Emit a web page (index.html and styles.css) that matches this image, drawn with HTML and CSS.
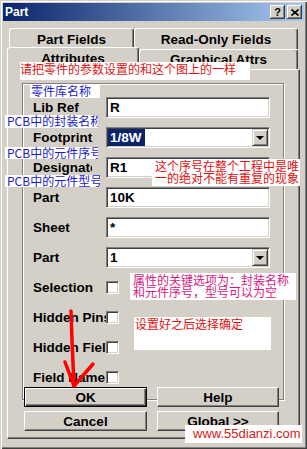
FILE: index.html
```html
<!DOCTYPE html>
<html lang="zh">
<head>
    <meta charset="UTF-8">
    <title>Part</title>
    <link rel="stylesheet" href="styles.css">
</head>
<body>
<div class="window">
    <div class="titlebar">
        <span class="title">Part</span>
        <div class="caption-btns">
            <span class="cbtn">?</span>
            <span class="cbtn">
                <svg width="8" height="7" viewBox="0 0 8 7"><path d="M0.5 0.5 L7.5 6.5 M7.5 0.5 L0.5 6.5" stroke="#000" stroke-width="1.6"/></svg>
            </span>
        </div>
    </div>

    <div class="client">
        <div class="tabrow row1">
            <div class="tab t1">Part Fields</div>
            <div class="tab t2">Read-Only Fields</div>
        </div>
        <div class="tabrow row2">
            <div class="tab t3 active">Attributes</div>
            <div class="tab t4">Graphical Attrs</div>
        </div>

        <div class="panel">
            <div class="group">
                <div class="row"><span class="label">Lib Ref</span><div class="field">R</div></div>
                <div class="row"><span class="label">Footprint</span>
                    <div class="field select"><span class="sel">1/8W</span><span class="drop"></span></div>
                </div>
                <div class="row"><span class="label short">Designator</span><div class="field">R1</div></div>
                <div class="row"><span class="label">Part</span><div class="field">10K</div></div>
                <div class="row"><span class="label">Sheet</span><div class="field">*</div></div>
                <div class="row"><span class="label">Part</span>
                    <div class="field select"><span>1</span><span class="drop"></span></div>
                </div>
                <div class="row"><span class="label">Selection</span><span class="check"></span></div>
                <div class="row"><span class="label">Hidden Pins</span><span class="check"></span></div>
                <div class="row"><span class="label">Hidden Fields</span><span class="check"></span></div>
                <div class="row"><span class="label">Field Name</span><span class="check"></span></div>
            </div>
            <div class="buttons">
                <div class="btn default">OK</div>
                <div class="btn">Help</div>
                <div class="btn">Cancel</div>
                <div class="btn">Global &gt;&gt;</div>
            </div>
        </div>
    </div>

    <!-- annotations pasted over the dialog -->
    <div class="note red n-top">请把零件的参数设置的和这个图上的一样</div>
    <div class="note blue n-lib">零件库名称</div>
    <div class="note blue n-fp">PCB中的封装名称</div>
    <div class="note blue n-des">PCB中的元件序号</div>
    <div class="note blue n-part">PCB中的元件型号</div>
    <div class="note red n-uniq">这个序号在整个工程中是唯<br>一的绝对不能有重复的现象</div>
    <div class="note pink n-key">属性的关键选项为：封装名称<br>和元件序号，型号可以为空</div>
    <div class="note red n-ok">设置好之后选择确定</div>
    <div class="watermark">www.55dianzi.com</div>

    <svg class="arrow" width="307" height="449" viewBox="0 0 307 449">
        <path d="M71 311 L72 340 L74 386" stroke="#f00" stroke-width="3.5" fill="none" stroke-linecap="round"/>
        <path d="M65 362 L74 386 L93 364" stroke="#f00" stroke-width="3.5" fill="none" stroke-linecap="round" stroke-linejoin="round"/>
    </svg>
</div>
</body>
</html>
```

FILE: styles.css
```css
body {
    margin: 0;
    font-family: "Liberation Sans", Arial, sans-serif;
    background: #d4d0c8;
}
.window {
    position: relative;
    width: 307px;
    height: 449px;
    box-sizing: border-box;
    padding: 3px;
    background: #d4d0c8;
    box-shadow: inset 1px 1px #d4d0c8, inset 2px 2px #fff, inset -1px -1px #404040, inset -2px -2px #808080;
    overflow: hidden;
}
.titlebar {
    height: 18px;
    display: flex;
    align-items: center;
    justify-content: space-between;
    padding: 0 2px 0 2px;
    background: linear-gradient(to right, #0a246a, #a6caf0);
}
.title {
    color: #fff;
    font-weight: bold;
    font-size: 12px;
}
.caption-btns {
    display: flex;
    gap: 2px;
}
.cbtn {
    width: 15px;
    height: 14px;
    box-sizing: border-box;
    background: #d4d0c8;
    box-shadow: inset -1px -1px #404040, inset 1px 1px #fff, inset -2px -2px #808080;
    display: flex;
    align-items: center;
    justify-content: center;
    font-weight: bold;
    font-size: 11px;
}
.client {
    padding: 7px 4px 0 4px;
}
.tabrow {
    display: flex;
}
.row1 {
    margin-left: 2px;
    height: 21px;
}
.row2 {
    height: 20px;
}
.tab {
    box-sizing: border-box;
    height: 100%;
    background: #d4d0c8;
    border-top: 1px solid #fff;
    border-left: 1px solid #fff;
    border-right: 1px solid #404040;
    box-shadow: inset -1px 0 #808080;
    border-radius: 3px 3px 0 0;
    display: flex;
    align-items: center;
    justify-content: center;
    font-weight: bold;
    font-size: 13.5px;
}
.t1 { width: 125px; }
.t2 { width: 164px; }
.t3 { width: 132px; }
.t4 { width: 159px; }
.tab.active {
    position: relative;
    z-index: 2;
    height: 23px;
    margin-top: -2px;
    padding-bottom: 2px;
}
.panel {
    width: 293px;
    height: 370px;
    box-sizing: border-box;
    border-top: 1px solid #fff;
    border-left: 1px solid #fff;
    border-right: 1px solid #404040;
    border-bottom: 1px solid #404040;
    box-shadow: inset -1px -1px #808080;
    padding: 13px 0 0 14px;
}
.group {
    width: 262px;
    height: 317px;
    box-sizing: border-box;
    border: 1px solid #808080;
    box-shadow: inset 1px 1px #fff, 1px 1px #fff;
    padding: 13px 0 0 10px;
    display: flex;
    flex-direction: column;
    gap: 9px;
}
.row {
    display: flex;
    align-items: center;
    height: 21px;
}
.label {
    width: 73px;
    flex-shrink: 0;
    overflow: hidden;
    white-space: nowrap;
    font-weight: bold;
    font-size: 13.5px;
}
.label.short {
    width: 59px;
    margin-right: 14px;
}
.field {
    width: 164px;
    height: 21px;
    box-sizing: border-box;
    background: #fff;
    border: 1px solid;
    border-color: #808080 #fff #fff #808080;
    box-shadow: inset 1px 1px #404040, inset -1px -1px #d4d0c8;
    padding-left: 3px;
    display: flex;
    align-items: center;
    font-weight: bold;
    font-size: 13.5px;
}
.select {
    padding-left: 1px;
}
.select span:first-child {
    padding-left: 2px;
}
.sel {
    background: #0a246a;
    color: #fff;
    height: 17px;
    line-height: 17px;
    padding-right: 3px;
}
.drop {
    margin-left: auto;
    margin-right: 1px;
    width: 16px;
    height: 17px;
    box-sizing: border-box;
    background: #d4d0c8;
    border: 1px solid;
    border-color: #d4d0c8 #404040 #404040 #d4d0c8;
    box-shadow: inset 1px 1px #fff, inset -1px -1px #808080;
    position: relative;
}
.drop::after {
    content: "";
    position: absolute;
    left: 3px;
    top: 6px;
    border-left: 4px solid transparent;
    border-right: 4px solid transparent;
    border-top: 4px solid #000;
}
.check {
    width: 13px;
    height: 13px;
    box-sizing: border-box;
    background: #fff;
    border: 1px solid;
    border-color: #808080 #fff #fff #808080;
    box-shadow: inset 1px 1px #404040, inset -1px -1px #d4d0c8;
}
.buttons {
    display: grid;
    grid-template-columns: 123px 122px;
    grid-auto-rows: 20px;
    column-gap: 10px;
    row-gap: 4px;
    margin: -13px 0 0 2px;
}
.btn {
    box-sizing: border-box;
    background: #d4d0c8;
    border: 1px solid;
    border-color: #fff #404040 #404040 #fff;
    box-shadow: inset -1px -1px #808080;
    display: flex;
    align-items: center;
    justify-content: center;
    font-weight: bold;
    font-size: 13.5px;
}
.btn.default {
    border-color: #000;
    box-shadow: inset 1px 1px #fff, inset -1px -1px #404040, inset -2px -2px #808080;
}
.note {
    position: absolute;
    z-index: 5;
    box-sizing: border-box;
    background: #fff;
    font-family: "Noto Sans CJK SC", sans-serif;
    font-size: 12px;
    line-height: 12px;
    white-space: nowrap;
    overflow: hidden;
}
.red { color: #e01010; }
.blue { color: #1c1cc8; }
.pink { color: #d8187e; }
.n-top { left: 20px; top: 62px; width: 230px; height: 18px; padding-top: 1px; }
.n-lib { left: 30px; top: 84px; width: 70px; height: 14px; padding: 1px 0 0 1px; }
.n-fp { left: 5px; top: 115px; width: 93px; height: 13px; padding-left: 2px; }
.n-des { left: 5px; top: 147px; width: 93px; height: 12px; padding-left: 2px; }
.n-part { left: 5px; top: 175px; width: 95px; height: 12px; padding-left: 2px; }
.n-uniq { left: 152px; top: 159px; width: 148px; height: 27px; padding: 1px 0 0 3px; }
.n-key { left: 130px; top: 273px; width: 166px; height: 27px; padding: 1px 0 0 3px; }
.n-ok { left: 134px; top: 317px; width: 137px; height: 33px; padding: 1px 0 0 1px; }
.watermark {
    position: absolute;
    z-index: 5;
    left: 185px;
    top: 425px;
    width: 117px;
    height: 18px;
    box-sizing: border-box;
    padding-left: 8px;
    background: #fff;
    color: #d42020;
    font-size: 13px;
    line-height: 18px;
}
.arrow {
    position: absolute;
    z-index: 6;
    left: 0;
    top: 0;
    pointer-events: none;
}
```
